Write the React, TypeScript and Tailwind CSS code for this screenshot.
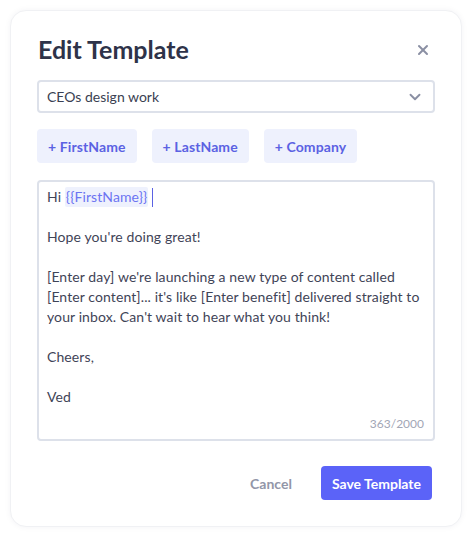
import { ChevronDown, X } from "lucide-react";

const variables = ["FirstName", "LastName", "Company"];

export default function App() {
  return (
    <div
      className="min-h-[537px] w-[472px] bg-white p-[10px] text-[#3f4457]"
      style={{ fontFamily: "Lato, 'Noto Sans', sans-serif" }}
    >
      <div className="flex h-[517px] flex-col rounded-[16px] border border-[#f0f1f4] bg-white px-[26px] pt-[22px] shadow-[0_0_6px_rgba(30,40,80,0.05)]">
        <div className="flex items-center justify-between pl-px">
          <h2 className="text-[25px] font-bold leading-[32px] text-[#2e3349]">Edit Template</h2>
          <button className="mr-[4px] mt-[2px] text-[#8a8fa3]">
            <X className="h-[16px] w-[16px]" strokeWidth={3} />
          </button>
        </div>

        <div className="mt-[15px] flex h-[33px] items-center justify-between rounded-[4px] border-2 border-[#dde1ea] pl-[8px] pr-[9px]">
          <span className="text-[14px] text-[#3a3f52]">CEOs design work</span>
          <ChevronDown className="h-[18px] w-[18px] text-[#8a8fa3]" strokeWidth={2.5} />
        </div>

        <div className="mt-[16px] flex gap-[15px]">
          {variables.map((v) => (
            <button
              key={v}
              className="h-[34px] rounded-[4px] bg-[#eef1fd] px-[11px] text-[14px] font-bold tracking-[0.1px] text-[#5b62e3]"
            >
              + {v}
            </button>
          ))}
        </div>

        <div className="mt-[17px] flex h-[261px] flex-col rounded-[4px] border-2 border-[#dde1ea] px-[8px] pt-[5px] pb-[6px]">
          <div className="flex-1 text-[14px] leading-[20px] tracking-[0.1px]">
            <p className="flex items-center">
              Hi&nbsp;
              <span className="rounded-[2px] bg-[#eef1fd] px-px text-[#6c74f2]">{"{{FirstName}}"}</span>
              <span className="ml-[4px] inline-block h-[19px] w-px bg-[#5b62e3]" />
            </p>
            <p className="mt-[20px]">Hope you're doing great!</p>
            <p className="mt-[20px]">
              [Enter day] we're launching a new type of content called [Enter content]... it's like [Enter
              benefit] delivered straight to your inbox. Can't wait to hear what you think!
            </p>
            <p className="mt-[20px]">Cheers,</p>
            <p className="mt-[20px]">Ved</p>
          </div>
          <div className="pr-px text-right text-[12px] text-[#a2a6b5]">363/2000</div>
        </div>

        <div className="mt-[25px] flex items-center justify-end gap-[29px] pr-[3px]">
          <button className="text-[14px] font-bold text-[#9296a8]">Cancel</button>
          <button className="h-[34px] rounded-[4px] bg-[#5b63f8] px-[11px] text-[14px] font-bold text-white">
            Save Template
          </button>
        </div>
      </div>
    </div>
  );
}
